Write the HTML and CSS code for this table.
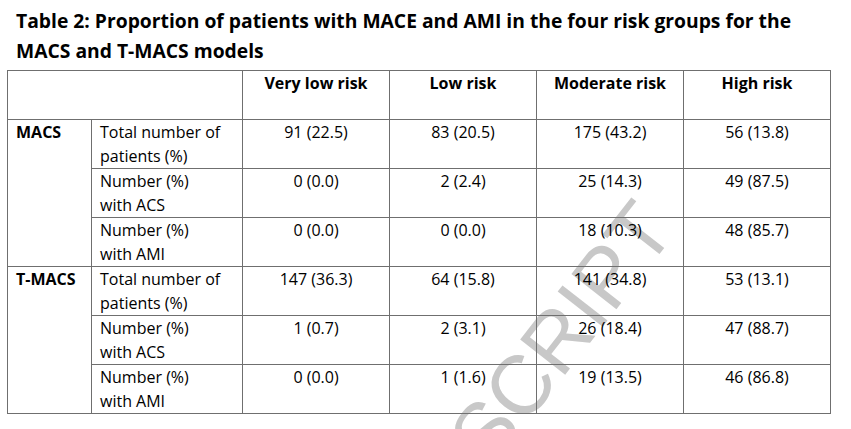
FILE: index.html
```html
<!DOCTYPE html>
<html lang="en">
<head>
<meta charset="utf-8">
<title>Table 2</title>
<link rel="stylesheet" href="styles.css">
</head>
<body>
<div class="page">
  <h1 class="title">Table 2: Proportion of patients with MACE and AMI in the four risk groups for the MACS and T-MACS models</h1>
  <table class="data">
    <colgroup>
      <col class="c-model">
      <col class="c-label">
      <col class="c-num">
      <col class="c-num">
      <col class="c-num">
      <col class="c-num">
    </colgroup>
    <thead>
      <tr class="head">
        <th colspan="2"></th>
        <th>Very low risk</th>
        <th class="dark">Low risk</th>
        <th>Moderate risk</th>
        <th>High risk</th>
      </tr>
    </thead>
    <tbody>
      <tr>
        <td rowspan="3" class="model">MACS</td>
        <td class="label">Total number of patients (%)</td>
        <td class="num">91 (22.5)</td>
        <td class="num dark">83 (20.5)</td>
        <td class="num">175 (43.2)</td>
        <td class="num">56 (13.8)</td>
      </tr>
      <tr>
        <td class="label">Number (%)<br>with ACS</td>
        <td class="num">0 (0.0)</td>
        <td class="num dark">2 (2.4)</td>
        <td class="num">25 (14.3)</td>
        <td class="num">49 (87.5)</td>
      </tr>
      <tr>
        <td class="label">Number (%)<br>with AMI</td>
        <td class="num">0 (0.0)</td>
        <td class="num dark">0 (0.0)</td>
        <td class="num">18 (10.3)</td>
        <td class="num">48 (85.7)</td>
      </tr>
      <tr>
        <td rowspan="3" class="model">T-MACS</td>
        <td class="label">Total number of patients (%)</td>
        <td class="num">147 (36.3)</td>
        <td class="num dark">64 (15.8)</td>
        <td class="num">141 (34.8)</td>
        <td class="num">53 (13.1)</td>
      </tr>
      <tr>
        <td class="label">Number (%)<br>with ACS</td>
        <td class="num">1 (0.7)</td>
        <td class="num dark">2 (3.1)</td>
        <td class="num">26 (18.4)</td>
        <td class="num">47 (88.7)</td>
      </tr>
      <tr>
        <td class="label">Number (%)<br>with AMI</td>
        <td class="num">0 (0.0)</td>
        <td class="num dark">1 (1.6)</td>
        <td class="num">19 (13.5)</td>
        <td class="num">46 (86.8)</td>
      </tr>
    </tbody>
  </table>
  <div class="watermark" aria-hidden="true">ACCEPTED MANUSCRIPT</div>
</div>
</body>
</html>
```

FILE: styles.css
```css
html, body {
  margin: 0;
  padding: 0;
  background: #ffffff;
}

.page {
  position: relative;
  width: 851px;
  height: 429px;
  overflow: hidden;
  padding: 6px 0 0 7px;
  box-sizing: border-box;
  font-family: "Open Sans", Lato, sans-serif;
  color: #000;
}

.title {
  margin: 0 0 4px 9px;
  width: 800px;
  font-size: 19.3px;
  line-height: 30px;
  font-weight: 700;
}

.data {
  position: relative;
  z-index: 1;
  border-collapse: collapse;
  table-layout: fixed;
  width: 822px;
  font-size: 16px;
  line-height: 23.5px;
}

.c-model { width: 84px; }
.c-label { width: 151px; }
.c-num { width: 147px; }

.data th,
.data td {
  border: 1px solid #6f6f6f;
  padding: 1px 0 0 0;
  vertical-align: top;
}

.data .dark {
  border-left-color: #000;
}

.head th {
  height: 47px;
  padding-top: 1px;
  font-weight: 700;
  text-align: center;
}

.data td {
  height: 47px;
}

.model {
  font-weight: 700;
  padding-left: 8px !important;
  text-align: left;
}

.label {
  padding-left: 8px !important;
  text-align: left;
}

.num {
  text-align: center;
}

.watermark {
  position: absolute;
  z-index: 0;
  right: 163px;
  top: 156px;
  height: 83px;
  line-height: 83px;
  font-family: "Liberation Sans", Arial, sans-serif;
  font-size: 83px;
  color: #c8c8c8;
  white-space: nowrap;
  transform-origin: 100% 100%;
  transform: rotate(-52deg);
}
```
